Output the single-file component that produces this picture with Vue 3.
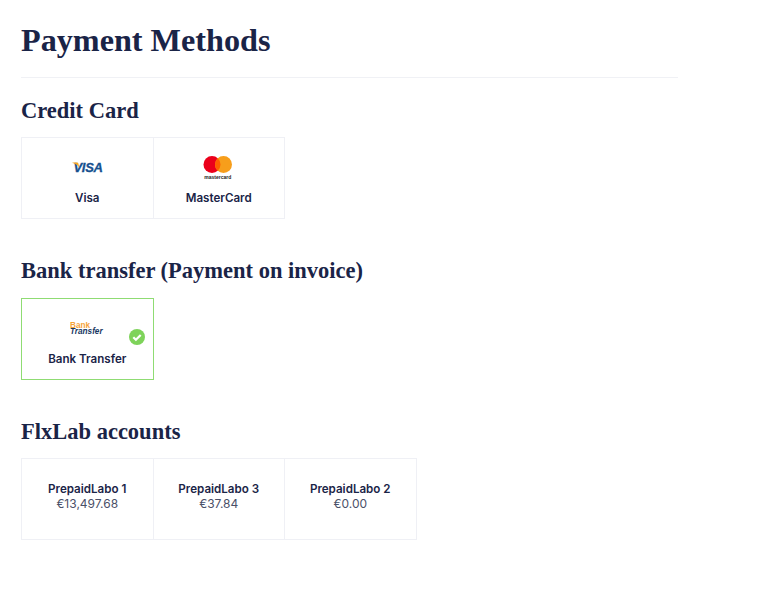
<template>
  <div class="page">
    <h1>Payment Methods</h1>

    <section class="group first">
      <h2>Credit Card</h2>
      <div class="cards">
        <div class="card">
          <div class="logo">
            <svg width="32" height="14" viewBox="0 0 32 14">
              <text x="2.500" y="11" class="visa-text">VISA</text>
              <path d="M1.500 1.500h4.500c.8 0 1.200.4 1.400 1l1 4.500C7.100 4.400 4.900 2.600 1.500 1.900z" fill="#f7a823" />
            </svg>
          </div>
          <span class="name">Visa</span>
        </div>
        <div class="card">
          <div class="logo">
            <svg width="32" height="24" viewBox="0 0 32 24">
              <circle cx="9" cy="8.500" r="8.500" fill="#eb001b" />
              <circle cx="20.500" cy="8.500" r="8.500" fill="#f79e1b" />
              <path d="M14.750 2.240a8.500 8.500 0 0 1 0 12.520a8.500 8.500 0 0 1 0-12.520z" fill="#ff5f00" />
              <text x="14.750" y="23" class="mc-text">mastercard</text>
            </svg>
          </div>
          <span class="name">MasterCard</span>
        </div>
      </div>
    </section>

    <section class="group bank">
      <h2>Bank transfer (Payment on invoice)</h2>
      <div class="cards">
        <div class="card selected">
          <div class="logo">
            <svg width="34" height="14" viewBox="0 0 34 14">
              <text class="bank-logo">
                <tspan x="0" y="6" class="bank-top">Bank</tspan>
                <tspan x="0" y="12" class="bank-bottom">Transfer</tspan>
              </text>
            </svg>
          </div>
          <span class="name">Bank Transfer</span>
          <svg class="check" width="16" height="16" viewBox="0 0 16 16">
            <circle cx="8" cy="8" r="8" fill="#7ed35a" />
            <path d="M4.300 8.200l2.600 2.600l4.800-4.900" fill="none" stroke="#fff" stroke-width="2.200" />
          </svg>
        </div>
      </div>
    </section>

    <section class="group">
      <h2>FlxLab accounts</h2>
      <div class="cards">
        <div v-for="acc in accounts" :key="acc.name" class="card account">
          <span class="name">{{ acc.name }}</span>
          <span class="amount">{{ acc.amount }}</span>
        </div>
      </div>
    </section>
  </div>
</template>

<script setup>
const accounts = [
  { name: 'PrepaidLabo 1', amount: '€13,497.68' },
  { name: 'PrepaidLabo 3', amount: '€37.84' },
  { name: 'PrepaidLabo 2', amount: '€0.00' }
]
</script>

<style>
html, body { margin: 0; background: #fff; }
</style>

<style scoped>
.page {
  width: 657px;
  height: 594px;
  margin-left: 21px;
  overflow: hidden;
  color: #1a2447;
  font-family: "Inter", Arial, sans-serif;
}

h1 {
  margin: 0;
  height: 78px;
  box-sizing: border-box;
  padding-top: 22px;
  border-bottom: 1px solid #f0f1f5;
  font-family: "Liberation Serif", serif;
  font-size: 32.200px;
  line-height: 36px;
  font-weight: 700;
}

h2 {
  margin: 0 0 13px;
  font-family: "Liberation Serif", serif;
  font-size: 22.500px;
  line-height: 26px;
  font-weight: 700;
}

.group { padding-top: 20px; height: 140px; }
.group.first { height: 141px; }
.group.bank { padding-top: 19px; height: 141px; }
.group.bank h2 { margin-bottom: 14px; }

.cards { display: flex; }

.card {
  position: relative;
  width: 132.500px;
  height: 82px;
  box-sizing: border-box;
  margin-right: -1px;
  border: 1px solid #eff0f5;
  display: flex;
  flex-direction: column;
  align-items: center;
  padding-top: 16px;
}

.logo {
  height: 28px;
  display: flex;
  align-items: center;
  justify-content: center;
}

.name {
  margin-top: 8px;
  font-size: 11.600px;
  line-height: 16px;
  font-weight: 600;
}

.selected { border-color: #8fdc73; }

.check {
  position: absolute;
  top: 30px;
  right: 8px;
}

.account { padding-top: 22px; }
.account .name { margin-top: 0; }

.amount {
  font-size: 12px;
  line-height: 14px;
  color: #4a5068;
}

.visa-text {
  font-family: "Liberation Sans", sans-serif;
  font-size: 13px;
  font-weight: 700;
  font-style: italic;
  letter-spacing: -0.300px;
  fill: #15508f;
  stroke: #15508f;
  stroke-width: 0.300px;
}

.mc-text {
  font-family: "Liberation Sans", sans-serif;
  font-size: 5px;
  font-weight: 700;
  text-anchor: middle;
  fill: #222;
}

.bank-logo {
  font-family: "Liberation Sans", sans-serif;
  font-size: 8.200px;
  font-weight: 700;
}

.bank-top { fill: #f5a33a; }

.bank-bottom {
  font-style: italic;
  fill: #17365f;
}
</style>
